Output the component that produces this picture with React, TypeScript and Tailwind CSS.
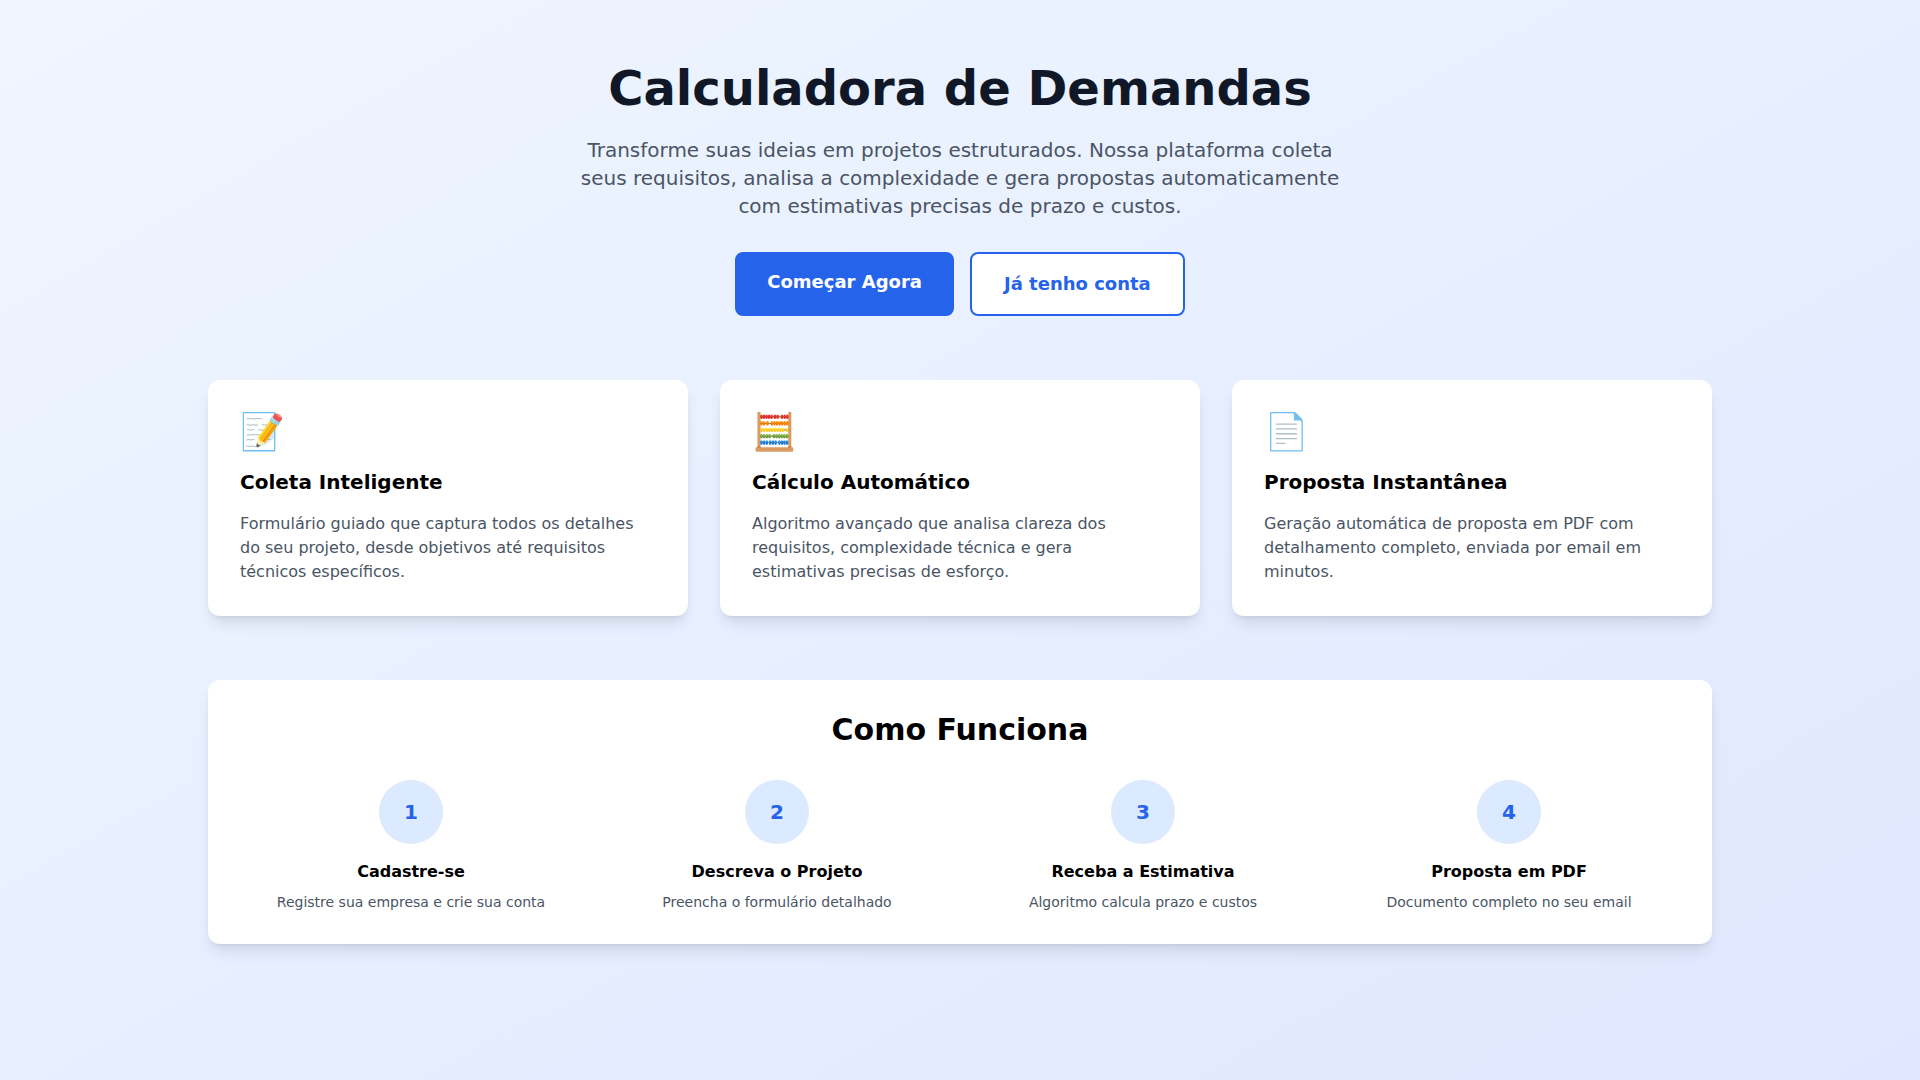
const features = [
  {
    icon: "📝",
    title: "Coleta Inteligente",
    text: "Formulário guiado que captura todos os detalhes do seu projeto, desde objetivos até requisitos técnicos específicos.",
  },
  {
    icon: "🧮",
    title: "Cálculo Automático",
    text: "Algoritmo avançado que analisa clareza dos requisitos, complexidade técnica e gera estimativas precisas de esforço.",
  },
  {
    icon: "📄",
    title: "Proposta Instantânea",
    text: "Geração automática de proposta em PDF com detalhamento completo, enviada por email em minutos.",
  },
];

const steps = [
  { title: "Cadastre-se", text: "Registre sua empresa e crie sua conta" },
  { title: "Descreva o Projeto", text: "Preencha o formulário detalhado" },
  { title: "Receba a Estimativa", text: "Algoritmo calcula prazo e custos" },
  { title: "Proposta em PDF", text: "Documento completo no seu email" },
];

export default function App() {
  return (
    <main className="min-h-screen bg-linear-to-br/srgb from-[#eff6ff] to-[#e0e7ff] font-['DejaVu_Sans',sans-serif] text-black">
      <div className="mx-auto max-w-[1536px] px-4 py-16">
        <header className="mb-16 text-center">
          <h1 className="mb-6 text-5xl font-bold text-gray-900">Calculadora de Demandas</h1>
          <p className="mx-auto mb-8 max-w-3xl text-xl text-gray-600">
            Transforme suas ideias em projetos estruturados. Nossa plataforma coleta seus requisitos, analisa a
            complexidade e gera propostas automaticamente com estimativas precisas de prazo e custos.
          </p>
          <div className="flex justify-center gap-4">
            <a href="#" className="rounded-lg bg-[#2563eb] px-8 py-4 text-lg font-semibold text-white hover:bg-blue-700">
              Começar Agora
            </a>
            <a
              href="#"
              className="rounded-lg border-2 border-[#2563eb] bg-white px-8 py-4 text-lg font-semibold text-[#2563eb] hover:bg-blue-50"
            >
              Já tenho conta
            </a>
          </div>
        </header>

        <section className="mb-16 grid gap-8 md:grid-cols-3">
          {features.map((feature) => (
            <article key={feature.title} className="rounded-xl bg-white p-8 shadow-lg">
              <div className="mb-4 text-4xl">{feature.icon}</div>
              <h3 className="mb-4 text-xl font-semibold">{feature.title}</h3>
              <p className="text-gray-600">{feature.text}</p>
            </article>
          ))}
        </section>

        <section className="rounded-xl bg-white p-8 shadow-lg">
          <h2 className="mb-8 text-center text-3xl font-bold">Como Funciona</h2>
          <ol className="grid gap-6 md:grid-cols-4">
            {steps.map((step, index) => (
              <li key={step.title} className="text-center">
                <div className="mx-auto mb-4 flex size-16 items-center justify-center rounded-full bg-[#dbeafe]">
                  <span className="text-xl font-bold text-[#2563eb]">{index + 1}</span>
                </div>
                <h4 className="mb-2 font-semibold">{step.title}</h4>
                <p className="text-sm text-gray-600">{step.text}</p>
              </li>
            ))}
          </ol>
        </section>
      </div>
    </main>
  );
}
